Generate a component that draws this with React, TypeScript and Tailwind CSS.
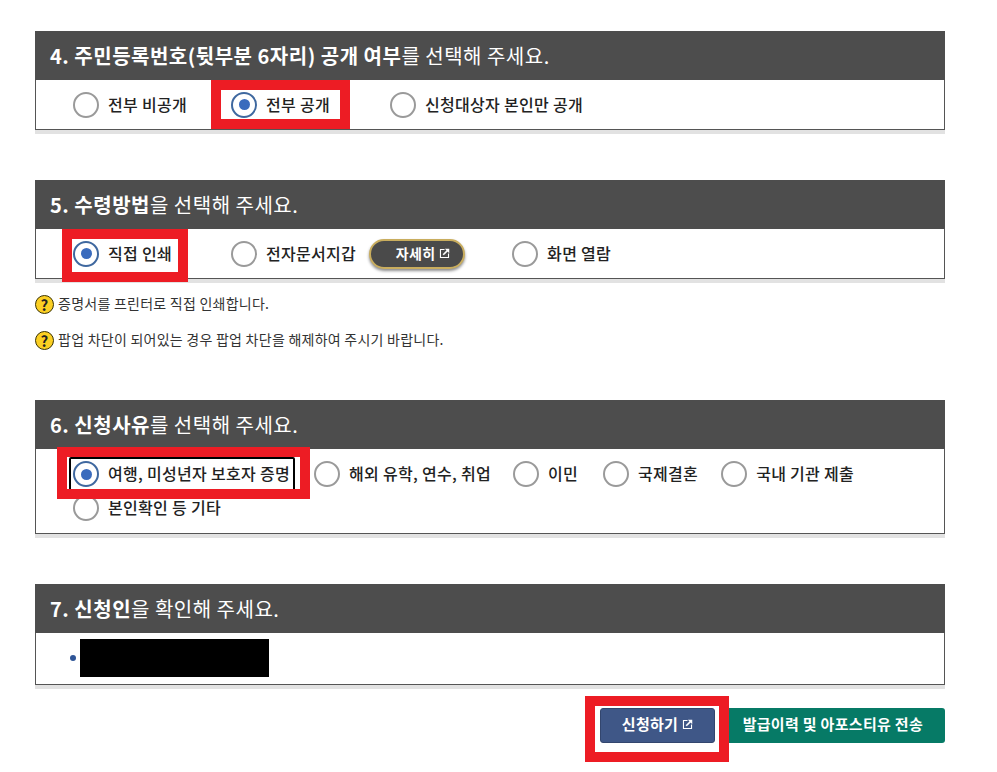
import type { ReactNode } from 'react'

const font = { fontFamily: '"Noto Sans CJK KR", "Noto Sans", sans-serif' }

const ExternalIcon = ({ className = '' }: { className?: string }) => (
  <svg viewBox="0 0 12 12" className={className} fill="none" stroke="currentColor" strokeWidth="1.2">
    <path d="M6 1.6H1.6v8.8h8.8V6" />
    <path d="M4.6 7.4 10 2" strokeWidth="1.8" />
    <path d="M6.4 0.8h4.8v4.8z" fill="currentColor" stroke="none" />
  </svg>
)

const Radio = ({ checked = false }: { checked?: boolean }) => (
  <span
    className={`flex h-[26px] w-[26px] shrink-0 items-center justify-center rounded-full border-2 bg-white ${
      checked ? 'border-[#3f689f]' : 'border-[#9a9a9a]'
    }`}
  >
    {checked && <span className="h-[11px] w-[11px] rounded-full bg-[#3a6bbd]" />}
  </span>
)

const Highlight = ({ className }: { className: string }) => (
  <span className={`pointer-events-none absolute z-10 border-[10px] border-[#ed1c24] ${className}`} />
)

interface OptionProps {
  label: string
  checked?: boolean
  className?: string
  children?: ReactNode
}

const Option = ({ label, checked, className = '', children }: OptionProps) => (
  <label className={`relative flex h-[26px] items-center ${className}`}>
    <Radio checked={checked} />
    <span className="ml-[9px] whitespace-nowrap pb-[2px] text-[16px] font-medium tracking-[0.3px] text-[#222]">
      {label}
    </span>
    {children}
  </label>
)

interface SectionProps {
  strong: string
  rest: string
  className?: string
  bodyClassName: string
  children: ReactNode
}

const Section = ({ strong, rest, className = '', bodyClassName, children }: SectionProps) => (
  <section className={`shadow-[0_4px_0_#e2e2e2] ${className}`}>
    <h2 className="flex h-[49px] items-center bg-[#4d4d4d] pl-[15px] text-[20px] font-normal tracking-[0.5px] text-white">
      <b className="font-bold">{strong}</b>
      {rest}
    </h2>
    <div className={`border border-t-0 border-[#555] bg-white pl-[37px] ${bodyClassName}`}>{children}</div>
  </section>
)

const Note = ({ text }: { text: string }) => (
  <p className="flex h-[18px] items-center text-[14px] tracking-[0.25px] text-[#333]">
    <span className="mr-[4px] flex h-[19px] w-[19px] items-center justify-center rounded-full border border-[#3b3300] bg-[#fbcf23] text-[15px] font-bold leading-none text-[#222]">
      ?
    </span>
    <span className="pb-[2px]">{text}</span>
  </p>
)

export default function App() {
  return (
    <div className="min-h-[772px] w-[980px] overflow-hidden bg-white px-[35px] pt-[31px]" style={font}>
      <Section
        strong="4. 주민등록번호(뒷부분 6자리) 공개 여부"
        rest="를 선택해 주세요."
        bodyClassName="flex h-[50px] items-center"
      >
        <Option label="전부 비공개" />
        <Option label="전부 공개" checked className="ml-[44px]">
          <Highlight className="-top-[12px] -bottom-[11px] -left-[20px] -right-[20px]" />
        </Option>
        <Option label="신청대상자 본인만 공개" className="ml-[60px]" />
      </Section>

      <Section
        strong="5. 수령방법"
        rest="을 선택해 주세요."
        className="mt-[50px]"
        bodyClassName="flex h-[50px] items-center"
      >
        <Option label="직접 인쇄" checked>
          <Highlight className="-top-[12px] -bottom-[15px] -left-[11px] -right-[16px]" />
        </Option>
        <Option label="전자문서지갑" className="ml-[59px]" />
        <button className="ml-[13px] flex h-[30px] w-[96px] items-center justify-center gap-[4px] rounded-full border-2 border-[#c9ad5e] bg-[#4a4a4a] pb-[1px] pl-[12px] text-[14px] font-bold tracking-[0.3px] text-white shadow-[0_2px_3px_rgba(0,0,0,0.45)]">
          자세히
          <ExternalIcon className="h-[11px] w-[11px]" />
        </button>
        <Option label="화면 열람" className="ml-[47px]" />
      </Section>

      <div className="mt-[16px] flex flex-col gap-[18px]">
        <Note text="증명서를 프린터로 직접 인쇄합니다." />
        <Note text="팝업 차단이 되어있는 경우 팝업 차단을 해제하여 주시기 바랍니다." />
      </div>

      <Section
        strong="6. 신청사유"
        rest="를 선택해 주세요."
        className="mt-[51px]"
        bodyClassName="flex h-[85px] flex-col pt-[12px]"
      >
        <div className="flex">
          <Option label="여행, 미성년자 보호자 증명" checked>
            <span className="pointer-events-none absolute -top-[4px] -bottom-[4px] -left-[4px] -right-[5px] rounded-[2px] border-2 border-black" />
            <Highlight className="-top-[14px] -bottom-[12px] -left-[16px] -right-[20px]" />
          </Option>
          <Option label="해외 유학, 연수, 취업" className="ml-[24px]" />
          <Option label="이민" className="ml-[22px]" />
          <Option label="국제결혼" className="ml-[25px]" />
          <Option label="국내 기관 제출" className="ml-[23px]" />
        </div>
        <Option label="본인확인 등 기타" className="mt-[8px]" />
      </Section>

      <Section
        strong="7. 신청인"
        rest="을 확인해 주세요."
        className="mt-[50px]"
        bodyClassName="flex h-[52px] items-start"
      >
        <span className="-ml-[3px] mt-[22px] h-[6px] w-[6px] rounded-full bg-[#2f5597]" />
        <span className="ml-[4px] mt-[6px] h-[38px] w-[189px] bg-black" />
      </Section>

      <div className="mt-[23px] flex justify-end">
        <button className="relative flex h-[35px] w-[115px] items-center justify-center gap-[4px] rounded-[3px] border border-[#33466e] bg-[#3f5787] pb-[2px] text-[15px] font-bold tracking-[0.3px] text-white">
          신청하기
          <ExternalIcon className="h-[11px] w-[11px]" />
          <Highlight className="-top-[13px] -bottom-[20px] -left-[16px] -right-[15px]" />
        </button>
        <button className="ml-[7px] flex h-[35px] w-[223px] items-center justify-end rounded-[3px] bg-[#067a66] pb-[2px] pr-[22px] text-[15px] font-bold tracking-[0.3px] text-white">
          발급이력 및 아포스티유 전송
        </button>
      </div>
    </div>
  )
}
